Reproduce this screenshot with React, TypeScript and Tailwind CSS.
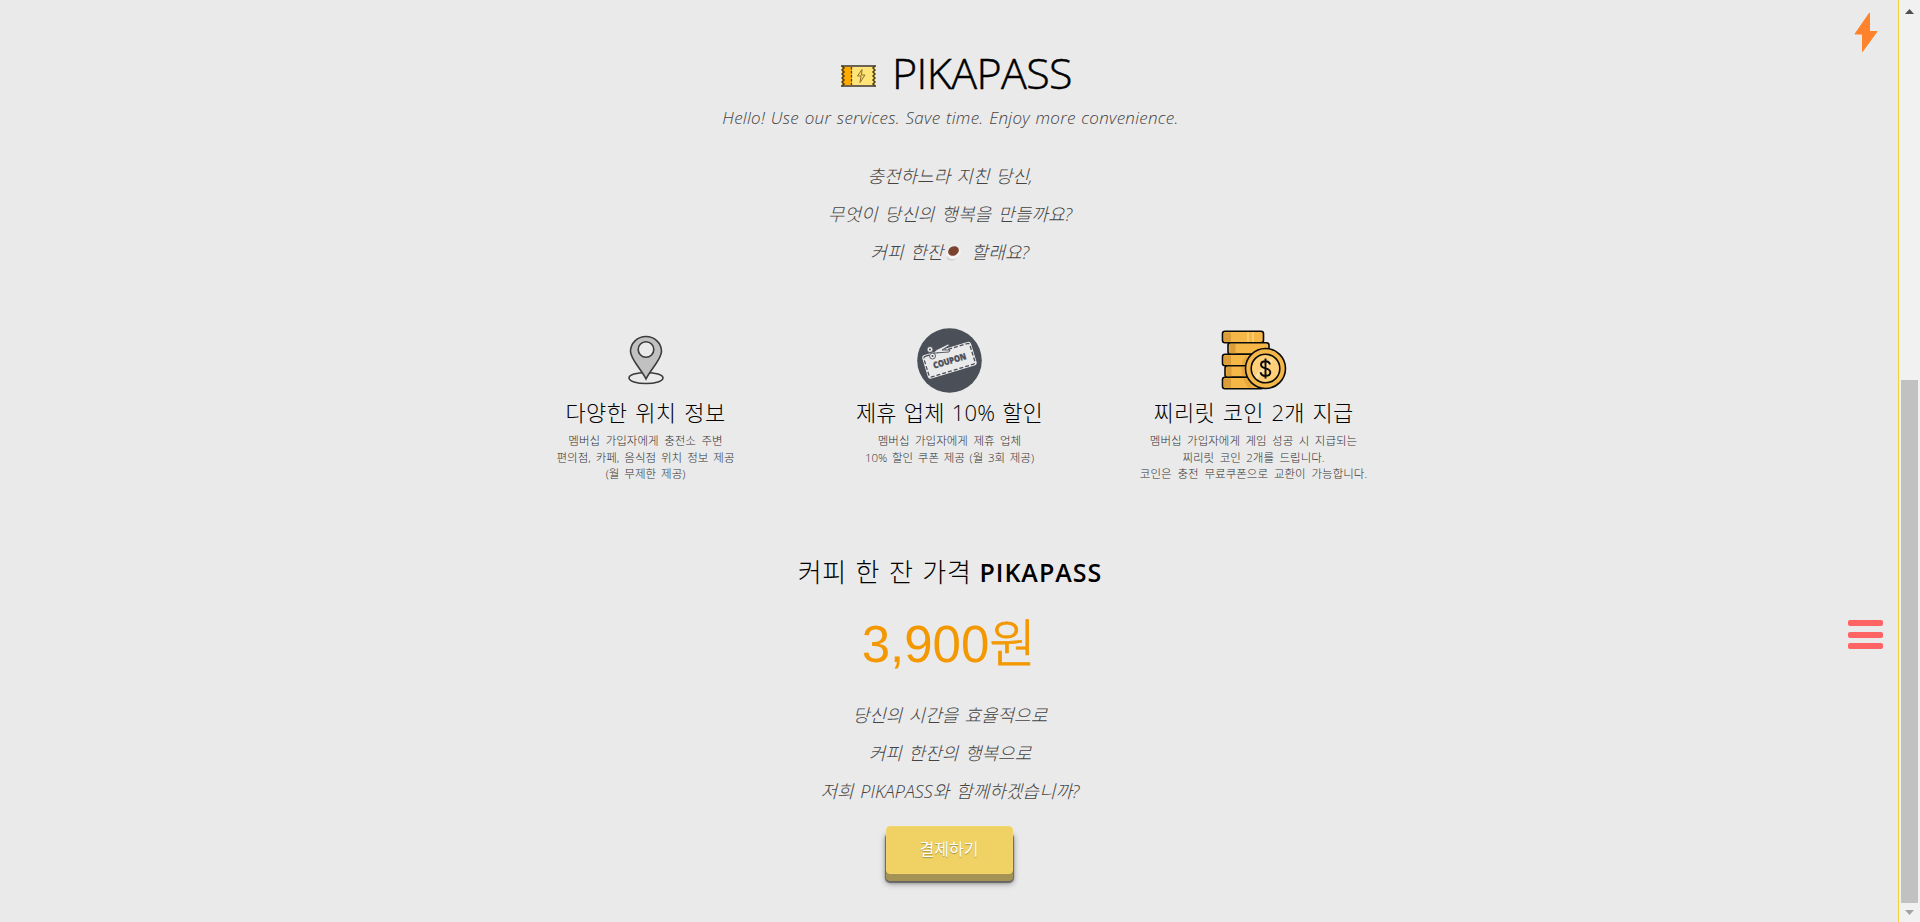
import { clsx } from "clsx";

interface Line {
  text: string;
  className?: string;
}

interface Feature {
  icon: React.ReactNode;
  title: Line;
  lines: Line[];
}

const TicketIcon = () => (
  <svg width="35" height="22" viewBox="0 0 35 22" className="mt-[6px]">
    <path d="M1 1h33v20H1z" fill="#ffe578" />
    <path d="M1 1h10v20H1z" fill="#ffab00" />
    <path d="M0 1h35M0 21h35" stroke="#6b6354" strokeWidth="2" />
    <path d="M1 1l2 2-2 2 2 2-2 2 2 2-2 2 2 2-2 2 2 2-2 2M34 1l-2 2 2 2-2 2 2 2-2 2 2 2-2 2 2 2-2 2 2 2" fill="none" stroke="#4a3d18" strokeWidth="1.5" />
    <path d="M10.500 2v18" stroke="#4a4020" strokeWidth="1.300" strokeDasharray="2.500 1.500" />
    <path d="M21 4.500l-4.500 6.500h3.500l-1 6.500 5-7.500h-3.500z" fill="#ffd95a" stroke="#8b6f35" strokeWidth="1" />
  </svg>
);

const CoffeeIcon = () => (
  <svg width="16" height="16" viewBox="0 0 16 16" className="mr-px ml-[3px]">
    <ellipse cx="7" cy="10.500" rx="6.500" ry="4.500" transform="rotate(-30 7 10.500)" fill="#cfcfcf" />
    <ellipse cx="7.500" cy="8" rx="7" ry="6" transform="rotate(-30 7.500 8)" fill="#f5f3f2" />
    <path d="M12 5q3-1 2 2l-3 2" fill="none" stroke="#f5f3f2" strokeWidth="1.500" />
    <ellipse cx="7.500" cy="6" rx="5.600" ry="4.500" transform="rotate(-30 7.500 6)" fill="#7b432f" />
  </svg>
);

const PinIcon = () => (
  <svg width="36" height="50" viewBox="0 0 36 50" fill="none" stroke="#3b3b3d" strokeWidth="1.600">
    <ellipse cx="18" cy="43" rx="17" ry="5.500" />
    <path d="M18 44C13 34 2.500 24 2.500 16.500a15.500 15 0 0 1 31 0C33.500 24 23 34 18 44z" fill="#c1c1c1" />
    <circle cx="18" cy="14.500" r="7.800" fill="#eaeaea" />
  </svg>
);

const CouponIcon = () => (
  <svg width="65" height="65" viewBox="0 0 65 65">
    <circle cx="32.500" cy="32.500" r="32.300" fill="#4b4f58" />
    <g transform="rotate(-17 32.500 32.500)">
      <rect x="7" y="20" width="51" height="24.500" rx="3" fill="#eaeaea" />
      <rect x="8.500" y="21.500" width="48" height="21.500" rx="2" fill="none" stroke="#4b4f58" strokeWidth="1.300" strokeDasharray="4 2" />
      <text x="32.500" y="36" textAnchor="middle" fontSize="8.800" fontWeight="800" fontFamily="Open Sans" fill="#4b4f58" stroke="#4b4f58" strokeWidth=".3" textLength="34" lengthAdjust="spacingAndGlyphs">
        COUPON
      </text>
    </g>
    <g fill="#eaeaea" stroke="#4b4f58" strokeWidth=".9">
      <path d="M15 27l4-5 12-6 2 1-8 5 8 0-1 2-14 1z" />
      <circle cx="13" cy="21.500" r="3" />
      <circle cx="15.500" cy="28" r="3" />
    </g>
    <circle cx="13" cy="21.500" r="1" fill="#4b4f58" />
    <circle cx="15.500" cy="28" r="1" fill="#4b4f58" />
  </svg>
);

const CoinsIcon = () => (
  <svg width="66" height="60" viewBox="0 0 66 60" fill="#f5b748" stroke="#0a0a0a" strokeWidth="1.600">
    <rect x="1.500" y="1.300" width="41" height="11.500" rx="2.500" />
    <rect x="7" y="12.800" width="41" height="11.500" rx="2.500" />
    <rect x="1.500" y="24.300" width="41" height="11.500" rx="2.500" />
    <rect x="4" y="35.800" width="41" height="11.500" rx="2.500" />
    <rect x="1.500" y="47.200" width="41" height="11.500" rx="2.500" />
    <g stroke="none" fill="#dc9c38">
      <path d="M3 2.500h7v9.300H3zM8.500 14h6v9.300h-6zM3 25.500h7v9.300H3zM5.500 37h5v9.300h-5zM3 48.400h7v9.300H3z" />
      <path d="M26 25.200v9.700h-5q0-6 5-9.700zM20 37h5v9.300h-4zM22 48.400h5l6 9.300h-6z" opacity=".6" />
    </g>
    <path d="M27 2.200v9.700M32 2.200v9.700" stroke="#ffcb69" strokeWidth="2" />
    <circle cx="44.500" cy="38.500" r="20" />
    <circle cx="44.500" cy="38.500" r="14.300" fill="#ffd078" />
    <path d="M34 46l15-17 3 2-16 18z" stroke="none" fill="#ffe0a3" />
    <path d="M49 34.500c-.5-2.300-2.300-3.300-4.500-3.300-2.500 0-4.500 1.300-4.500 3.500 0 5 9.300 2.500 9.300 7.600 0 2.500-2.200 3.700-4.800 3.700s-4.500-1.300-5-3.700M44.500 28.500v20" fill="none" strokeWidth="1.900" />
  </svg>
);

const intro: Line[] = [
  { text: "충전하느라 지친 당신,", className: "[word-spacing:1.5px]" },
  { text: "무엇이 당신의 행복을 만들까요?", className: "tracking-[0.1px] [word-spacing:2px]" },
];

const outro: Line[] = [
  { text: "당신의 시간을 효율적으로", className: "[word-spacing:1.5px]" },
  { text: "커피 한잔의 행복으로", className: "[word-spacing:2px]" },
  { text: "저희 PIKAPASS와 함께하겠습니까?", className: "[word-spacing:2px]" },
];

const features: Feature[] = [
  {
    icon: <PinIcon />,
    title: { text: "다양한 위치 정보", className: "tracking-[0.4px] [word-spacing:1.7px]" },
    lines: [
      { text: "멤버십 가입자에게 충전소 주변", className: "[word-spacing:2.6px]" },
      { text: "편의점, 카페, 음식점 위치 정보 제공", className: "[word-spacing:2px]" },
      { text: "(월 무제한 제공)", className: "[word-spacing:2px]" },
    ],
  },
  {
    icon: <CouponIcon />,
    title: { text: "제휴 업체 10% 할인", className: "tracking-[0.2px] [word-spacing:1.1px]" },
    lines: [
      { text: "멤버십 가입자에게 제휴 업체", className: "[word-spacing:2.5px]" },
      { text: "10% 할인 쿠폰 제공 (월 3회 제공)", className: "[word-spacing:1.7px]" },
    ],
  },
  {
    icon: <CoinsIcon />,
    title: { text: "찌리릿 코인 2개 지급", className: "tracking-[0.3px] [word-spacing:1.6px]" },
    lines: [
      { text: "멤버십 가입자에게 게임 성공 시 지급되는", className: "[word-spacing:2.5px]" },
      { text: "찌리릿 코인 2개를 드립니다.", className: "[word-spacing:2.5px]" },
      { text: "코인은 충전 무료쿠폰으로 교환이 가능합니다.", className: "[word-spacing:2.9px]" },
    ],
  },
];

const Slogan = ({ lines }: { lines: Line[] }) => (
  <>
    {lines.map((line) => (
      <p key={line.text} className={clsx("h-[38px] text-[18px] leading-[36px] font-light whitespace-nowrap text-[#444] italic", line.className)}>
        {line.text}
      </p>
    ))}
  </>
);

const FeatureCard = ({ icon, title, lines }: Feature) => (
  <div className="flex w-[304px] flex-col items-center whitespace-nowrap">
    <div className="flex h-[66px] items-center">{icon}</div>
    <h3 className={clsx("mt-[2px] h-[34px] text-[22px] leading-[34px] font-light text-black", title.className)}>{title.text}</h3>
    <div className="mt-[3px] flex flex-col items-center">
      {lines.map((line) => (
        <p key={line.text} className={clsx("h-[16.7px] text-[11.5px] leading-[17px] font-light text-[#333]", line.className)}>
          {line.text}
        </p>
      ))}
    </div>
  </div>
);

const Scrollbar = () => (
  <div className="flex w-[21px] flex-col items-center justify-between bg-[#f1f1f1]">
    <svg width="9" height="5" viewBox="0 0 9 5" className="mt-[9px]">
      <path d="M0 5L4.500 0 9 5z" fill="#505050" />
    </svg>
    <div className="mt-auto h-[523px] w-[17px] bg-[#c1c1c1]" />
    <svg width="9" height="5" viewBox="0 0 9 5" className="mt-[7px] mb-[7px]">
      <path d="M0 0h9L4.500 5z" fill="#a3a3a3" />
    </svg>
  </div>
);

export default function App() {
  return (
    <div className="flex h-[922px] w-[1920px] overflow-hidden bg-[#eaeaea] font-['Open_Sans','Noto_Sans_CJK_KR',sans-serif]">
      <main className="relative flex flex-1 flex-col items-center border-r border-[#f4d03a]">
        <header className="mt-[43px] ml-[15px] flex h-[60px] items-center gap-4">
          <TicketIcon />
          <h1 className="text-[43px] leading-[60px] font-light tracking-[-0.6px] whitespace-nowrap text-black [-webkit-text-stroke:0.5px_black]">PIKAPASS</h1>
        </header>
        <p className="ml-[3px] h-[30px] text-[17px] leading-[30px] font-light tracking-[0.28px] whitespace-nowrap text-[#444] italic [word-spacing:1px]">
          Hello! Use our services. Save time. Enjoy more convenience.
        </p>

        <section className="mt-[25px] ml-[2px] flex flex-col items-center">
          <Slogan lines={intro} />
          <p className="flex h-[38px] items-center text-[18px] leading-[38px] font-light whitespace-nowrap text-[#444] italic">
            <span className="mb-[2px] [word-spacing:2px]">커피 한잔</span>
            <CoffeeIcon />
            <span className="mb-[2px] ml-2 tracking-[0.3px]">할래요?</span>
          </p>
        </section>

        <section className="mt-[55px] ml-px flex h-[172px] justify-center">
          {features.map((feature) => (
            <FeatureCard key={feature.title.text} {...feature} />
          ))}
        </section>

        <h2 className="mt-[51px] ml-[2px] flex h-[44px] items-center gap-2 leading-[44px] whitespace-nowrap text-black">
          <span className="text-[26px] font-light tracking-[0.6px] [word-spacing:1.5px]">커피 한 잔 가격</span>
          <strong className="text-[25px] font-semibold tracking-[1px]">PIKAPASS</strong>
        </h2>
        <p className="mt-[19px] flex h-[64px] items-center font-['Liberation_Sans','Noto_Sans_CJK_KR',sans-serif] text-[51px] leading-[64px] whitespace-nowrap text-[#f39800]">
          <span>3,900</span>
          <span className="font-light [-webkit-text-stroke:0.8px_#f39800]">원</span>
        </p>

        <section className="mt-[20px] ml-[2px] flex flex-col items-center">
          <Slogan lines={outro} />
        </section>

        <button className="mt-[15px] h-[48px] w-[127px] rounded-[4px] border border-[#f2d56e] bg-[#f0d264] pb-[2px] text-[16px] leading-[42px] text-white shadow-[0_7px_0_#a59255,0_8px_1px_1px_#666,0_9px_6px_rgba(0,0,0,0.5)] [text-shadow:0_1px_1px_rgba(0,0,0,0.3)]">
          결제하기
        </button>

        <svg width="24" height="41" viewBox="0 0 24 41" className="absolute top-[12px] right-[20px]">
          <path d="M15.500 1v18.500H23L8.500 39.500V22H1z" fill="#ff832b" stroke="#ff832b" strokeWidth="1" strokeLinejoin="round" />
        </svg>
        <div className="absolute top-[620px] right-[15px] flex w-[35px] flex-col gap-[5.5px]">
          <span className="h-[6px] rounded-[2px] bg-[#ff6464]" />
          <span className="h-[6px] rounded-[2px] bg-[#ff6464]" />
          <span className="h-[6px] rounded-[2px] bg-[#ff6464]" />
        </div>
      </main>
      <Scrollbar />
    </div>
  );
}
